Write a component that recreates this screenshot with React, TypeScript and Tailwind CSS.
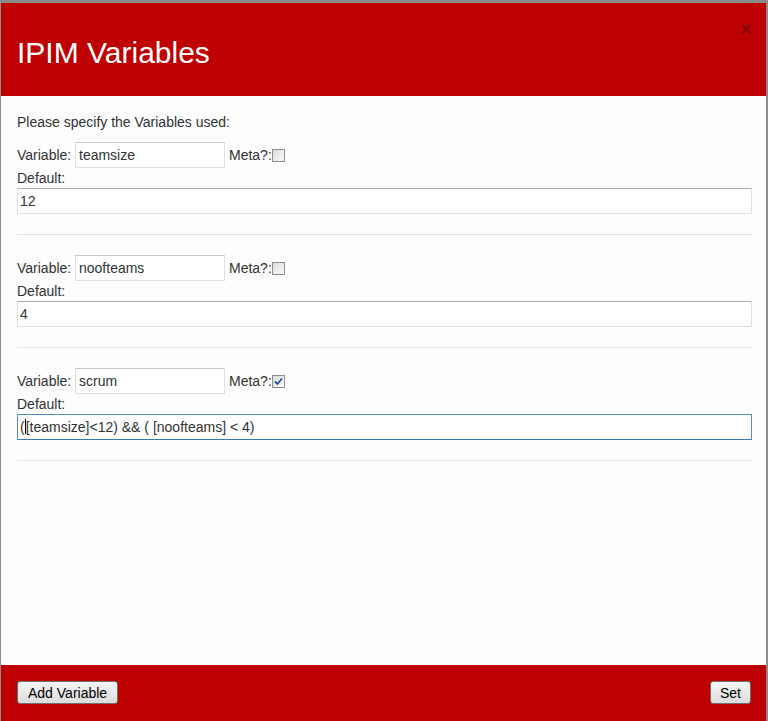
import React from "react";

const font = { fontFamily: '"Liberation Sans", Arial, sans-serif' };

function Checkbox({ checked }: { checked?: boolean }) {
  return (
    <span className="inline-flex h-[13px] w-[13px] items-center justify-center border border-[#8e8f8f] bg-gradient-to-br from-[#dcdcdc] to-[#fbfbfb]">
      {checked && (
        <svg width="9" height="9" viewBox="0 0 9 9">
          <path d="M1 4.5 L3.5 7 L8 1.5" stroke="#2a4fa8" strokeWidth="1.8" fill="none" />
        </svg>
      )}
    </span>
  );
}

function Block({
  name,
  def,
  checked,
  focused,
}: {
  name: string;
  def: React.ReactNode;
  checked?: boolean;
  focused?: boolean;
}) {
  return (
    <div>
      <div className="flex h-[26px] items-center">
        <span className="w-[58px] text-[14px] text-[#333]">Variable:</span>
        <div className="flex h-[26px] w-[150px] items-center border border-[#dde1e6] border-t-[#c5c8cc] bg-white px-[3px] text-[14px] text-[#333]">
          {name}
        </div>
        <span className="ml-[4px] text-[14px] text-[#333]">Meta?:</span>
        <Checkbox checked={checked} />
      </div>
      <div className="h-[20px] text-[14px] leading-[20px] text-[#333]">Default:</div>
      <div
        className={
          focused
            ? "flex h-[26px] items-center border border-[#5a8cc4] border-b-[#3c78b5] bg-white px-[2px] text-[14px] text-[#333]"
            : "flex h-[26px] items-center border border-[#dde1e6] border-t-[#abadb3] bg-white px-[2px] text-[14px] text-[#333]"
        }
      >
        {def}
      </div>
      <div className="my-[20px] h-px bg-[#e5e5e5]" />
    </div>
  );
}

export default function App() {
  return (
    <div
      style={font}
      className="flex h-[721px] w-[768px] flex-col border-t-[3px] border-l border-r-2 border-[#8c8c8c] bg-[#fdfdfd]"
    >
      <div className="relative flex h-[93px] shrink-0 items-center bg-[#be0000] pl-[16px] pr-[14px]">
        <h1 className="mt-[6px] text-[30px] leading-none text-white">IPIM Variables</h1>
        <span className="absolute right-[14px] top-[16px] text-[20px] font-bold leading-none text-[#8a0000]">
          ×
        </span>
      </div>
      <div className="flex-1 pl-[16px] pr-[14px] pt-[16px]">
        <p className="mb-[10px] h-[20px] text-[14px] leading-[20px] text-[#333]">
          Please specify the Variables used:
        </p>
        <Block name="teamsize" def="12" />
        <Block name="noofteams" def="4" />
        <Block
          name="scrum"
          checked
          focused
          def={
            <span>
              (<span className="inline-block h-[15px] w-px translate-y-[2px] bg-black" />
              [teamsize]&lt;12) &amp;&amp; ( [noofteams] &lt; 4)
            </span>
          }
        />
      </div>
      <div className="flex h-[56px] shrink-0 items-start justify-between bg-[#be0000] pl-[16px] pr-[15px] pt-[16px]">
        <button className="h-[23px] rounded-[3px] border border-[#707070] bg-gradient-to-b from-[#f6f6f6] to-[#dcdcdc] px-[10px] text-[14px] leading-none text-black">
          Add Variable
        </button>
        <button className="h-[23px] rounded-[3px] border border-[#707070] bg-gradient-to-b from-[#f6f6f6] to-[#dcdcdc] px-[9px] text-[14px] leading-none text-black">
          Set
        </button>
      </div>
    </div>
  );
}
